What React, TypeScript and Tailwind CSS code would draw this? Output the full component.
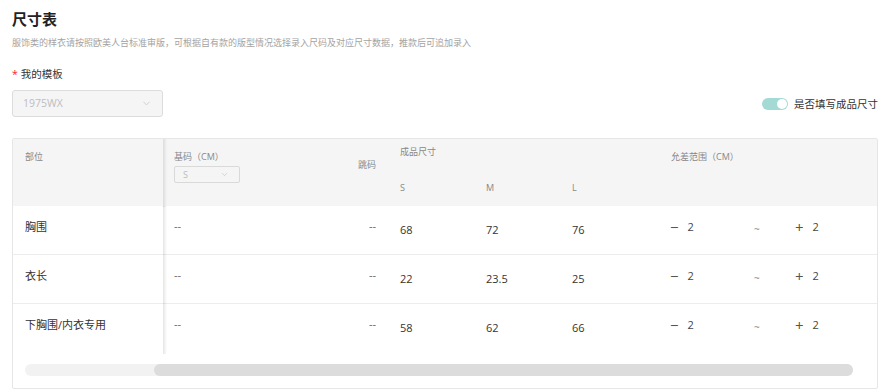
import { ChevronDown } from 'lucide-react';

const font = { fontFamily: '"Open Sans", "Noto Sans CJK SC", sans-serif' };

const rows = [
  { part: '胸围', sizes: ['68', '72', '76'] },
  { part: '衣长', sizes: ['22', '23.5', '25'] },
  { part: '下胸围/内衣专用', sizes: ['58', '62', '66'] },
];

// fixed first column with a soft shadow on its right edge
const fixedCol =
  "w-[150px] shrink-0 pl-[12px] relative z-10 after:content-[''] after:absolute after:top-0 after:bottom-[-1px] after:right-[-4px] after:w-[4px] after:bg-linear-to-r after:from-[rgba(0,0,0,0.1)] after:to-transparent";

const App = () => (
  <div
    className="w-[886px] h-[392px] overflow-hidden bg-white pl-[12px] pr-[8px] pt-[10px] text-[#333]"
    style={font}
  >
    {/* Heading */}
    <h1 className="text-[15px] leading-[18px] font-bold text-[#222]">尺寸表</h1>
    <p className="mt-[9px] text-[9px] leading-[12px] text-[#a3a3a3]">
      服饰类的样衣请按照欧美人台标准审版，可根据自有款的版型情况选择录入尺码及对应尺寸数据，推款后可追加录入
    </p>

    {/* Template select */}
    <div className="mt-[18px] text-[10.5px] leading-[14px] text-[#333]">
      <span className="text-[#f5222d] mr-[3px]">*</span>我的模板
    </div>
    <div className="mt-[9px] flex items-center justify-between">
      <div className="w-[151px] h-[27px] rounded-[3px] border border-[#dcdcdc] bg-[#f5f5f5] flex items-center justify-between pl-[10px] pr-[10px]">
        <span className="text-[10.5px] text-[#bdbdbd]">1975WX</span>
        <ChevronDown size={11} strokeWidth={1.5} className="text-[#bdbdbd]" />
      </div>
      <div className="flex items-center gap-[6px]">
        <div className="w-[26px] h-[12px] rounded-full bg-[#a3dad4] flex items-center justify-end pr-[1px]">
          <div className="w-[10px] h-[10px] rounded-full bg-white" />
        </div>
        <span className="text-[10.5px] leading-[14px] text-[#333]">是否填写成品尺寸</span>
      </div>
    </div>

    {/* Table */}
    <div className="mt-[21px] w-[866px] border border-[#e6e6e6] rounded-[2px] overflow-hidden">
      {/* Header */}
      <div className="flex h-[67px] bg-[#f5f5f5] text-[9px] leading-[12px] text-[#888]">
        <div className={`${fixedCol} bg-[#f5f5f5] pt-[12px]`}>部位</div>
        <div className="w-[225px] shrink-0 flex justify-between pl-[11px] pr-[12px]">
          <div className="pt-[12px]">
            <div>基码（CM）</div>
            <div className="mt-[3px] w-[66px] h-[17px] rounded-[2px] border border-[#d9d9d9] flex items-center justify-between pl-[8px] pr-[10px] text-[#bbb]">
              <span>S</span>
              <ChevronDown size={9} strokeWidth={1.5} />
            </div>
          </div>
          <div className="pt-[20px]">跳码</div>
        </div>
        <div className="w-[270px] shrink-0 pt-[7px] pl-[12px]">
          <div>成品尺寸</div>
          <div className="flex mt-[24px]">
            <span className="w-[90px]">S</span>
            <span className="w-[90px]">M</span>
            <span className="w-[90px]">L</span>
          </div>
        </div>
        <div className="flex-1 pt-[12px] pl-[13px]">允差范围（CM）</div>
      </div>

      {/* Body */}
      {rows.map((row, i) => (
        <div
          key={i}
          className={`flex h-[49px] text-[11px] leading-[14px] ${
            i < rows.length - 1 ? 'border-b border-[#ececec]' : ''
          }`}
        >
          <div className={`${fixedCol} bg-white pt-[14px] text-[#333]`}>{row.part}</div>
          <div className="w-[225px] shrink-0 flex justify-between pl-[11px] pr-[12px] pt-[13px] text-[#666]">
            <span>--</span>
            <span>--</span>
          </div>
          <div className="w-[270px] shrink-0 flex pl-[12px] pt-[17px] text-[#333]">
            {row.sizes.map((s, j) => (
              <span key={j} className="w-[90px]">
                {s}
              </span>
            ))}
          </div>
          <div className="flex-1 flex pl-[12px] pt-[14px] text-[#444]">
            <span className="w-[84px] flex items-center h-[14px]">
              <span className="text-[15px] leading-[14px] text-[#555]">−</span>
              <span className="ml-[9px]">2</span>
            </span>
            <span className="w-[41px] text-[#888] text-[10px] pt-[2px]">~</span>
            <span className="flex items-center h-[14px]">
              <span className="text-[15px] leading-[14px] text-[#555]">+</span>
              <span className="ml-[9px]">2</span>
            </span>
          </div>
        </div>
      ))}

      {/* Horizontal scrollbar */}
      <div className="h-[35px] pl-[12px] pr-[24px] pt-[11px]">
        <div className="h-[12px] rounded-full bg-[#f2f2f2] flex">
          <div className="ml-[129px] flex-1 rounded-full bg-[#dcdcdc]" />
        </div>
      </div>
    </div>
  </div>
);

export default App;
